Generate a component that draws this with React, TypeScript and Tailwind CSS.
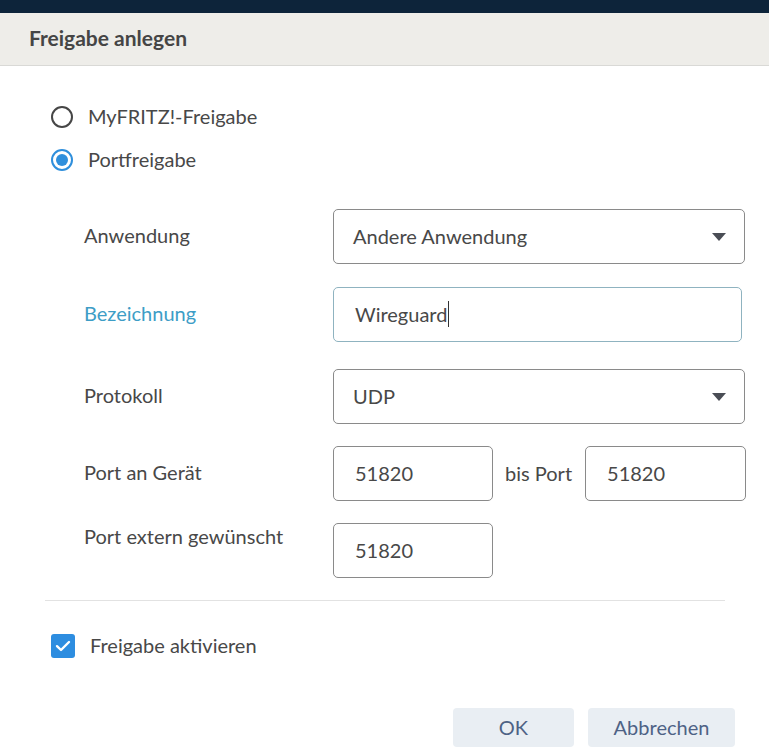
import React from "react";

const font = { fontFamily: "Lato, 'Open Sans', sans-serif" };

function Caret() {
  return (
    <svg width="14" height="8" viewBox="0 0 14 8" className="shrink-0">
      <path d="M0 0 L14 0 L7 8 Z" fill="#4a4d55" />
    </svg>
  );
}

function Row({
  label,
  blue,
  top,
  children,
  className,
}: {
  label: string;
  blue?: boolean;
  top?: boolean;
  children: React.ReactNode;
  className?: string;
}) {
  return (
    <div className={`flex ${top ? "items-start" : "items-center"} ${className ?? ""}`}>
      <div
        className={`w-[333px] pl-[84px] shrink-0 text-[20px] leading-[26px] whitespace-nowrap ${
          blue ? "text-[#3d9dc6]" : "text-[#484848]"
        } ${top ? "" : "pb-[3px]"}`}
      >
        {label}
      </div>
      {children}
    </div>
  );
}

export default function App() {
  return (
    <div className="w-[769px] h-[750px] bg-white overflow-hidden text-[#484848]" style={font}>
      <div className="h-[13px] bg-[#0d243a]" />
      <div className="h-[53px] bg-[#eeede9] border-b border-[#d9d9d6] flex items-center pl-[29px]">
        <span className="text-[21px] font-bold text-[#454545] pb-[2px]">Freigabe anlegen</span>
      </div>

      <div className="pl-[51px] pt-[40px]">
        <div className="flex items-center h-[22px] gap-[15px]">
          <span className="w-[22px] h-[22px] rounded-full border-2 border-[#464646] shrink-0" />
          <span className="text-[20px] leading-[26px] pb-[2px]">MyFRITZ!-Freigabe</span>
        </div>
        <div className="flex items-center h-[22px] gap-[15px] mt-[21px]">
          <span className="w-[22px] h-[22px] rounded-full border-2 border-[#2f8fdc] shrink-0 flex items-center justify-center">
            <span className="w-[12px] h-[12px] rounded-full bg-[#2f8fdc]" />
          </span>
          <span className="text-[20px] leading-[26px] pb-[2px]">Portfreigabe</span>
        </div>
      </div>

      <Row label="Anwendung" className="mt-[38px]">
        <div className="w-[412px] h-[55px] border border-[#8a8a8a] rounded-[5px] flex items-center justify-between pl-[19px] pr-[18px]">
          <span className="text-[20px] leading-[26px] pb-[2px]">Andere Anwendung</span>
          <Caret />
        </div>
      </Row>

      <Row label="Bezeichnung" blue className="mt-[23px]">
        <div className="w-[409px] h-[55px] border border-[#8fb3c0] rounded-[5px] flex items-center pl-[21px]">
          <span className="text-[20px] leading-[26px] pb-[2px]">Wireguard</span>
          <span className="w-[1px] h-[26px] bg-[#333] ml-[1px] mb-[2px]" />
        </div>
      </Row>

      <Row label="Protokoll" className="mt-[27px]">
        <div className="w-[412px] h-[55px] border border-[#8a8a8a] rounded-[5px] flex items-center justify-between pl-[19px] pr-[18px]">
          <span className="text-[20px] leading-[26px] pb-[2px]">UDP</span>
          <Caret />
        </div>
      </Row>

      <Row label="Port an Gerät" className="mt-[22px]">
        <div className="w-[160px] h-[55px] border border-[#8a8a8a] rounded-[5px] flex items-center pl-[21px]">
          <span className="text-[20px] leading-[26px] pb-[2px]">51820</span>
        </div>
        <span className="text-[20px] leading-[26px] pb-[2px] ml-[12px] mr-[13px] whitespace-nowrap">bis Port</span>
        <div className="w-[161px] h-[55px] border border-[#8a8a8a] rounded-[5px] flex items-center pl-[21px]">
          <span className="text-[20px] leading-[26px] pb-[2px]">51820</span>
        </div>
      </Row>

      <Row label="Port extern gewünscht" top className="mt-[22px]">
        <div className="w-[160px] h-[55px] border border-[#8a8a8a] rounded-[5px] flex items-center pl-[21px]">
          <span className="text-[20px] leading-[26px] pb-[2px]">51820</span>
        </div>
      </Row>

      <div className="ml-[45px] w-[680px] h-[1px] bg-[#e2e2e2] mt-[22px]" />

      <div className="pl-[51px] mt-[31px] flex items-center gap-[15px]">
        <span className="w-[24px] h-[24px] rounded-[3px] bg-[#2d8de0] flex items-center justify-center shrink-0">
          <svg width="16" height="12" viewBox="0 0 16 12">
            <path d="M2 6.2 L6 10 L14 2" fill="none" stroke="white" strokeWidth="2.4" strokeLinecap="round" strokeLinejoin="round" />
          </svg>
        </span>
        <span className="text-[20px] leading-[26px] pb-[2px]">Freigabe aktivieren</span>
      </div>

      <div className="flex justify-end gap-[14px] pr-[34px] mt-[48px]">
        <button className="w-[121px] h-[39px] rounded-[4px] bg-[#e9eef3] text-[20px] text-[#4e6285] pb-[2px]" style={font}>
          OK
        </button>
        <button className="w-[147px] h-[39px] rounded-[4px] bg-[#e9eef3] text-[20px] text-[#4e6285] pb-[2px]" style={font}>
          Abbrechen
        </button>
      </div>
    </div>
  );
}
